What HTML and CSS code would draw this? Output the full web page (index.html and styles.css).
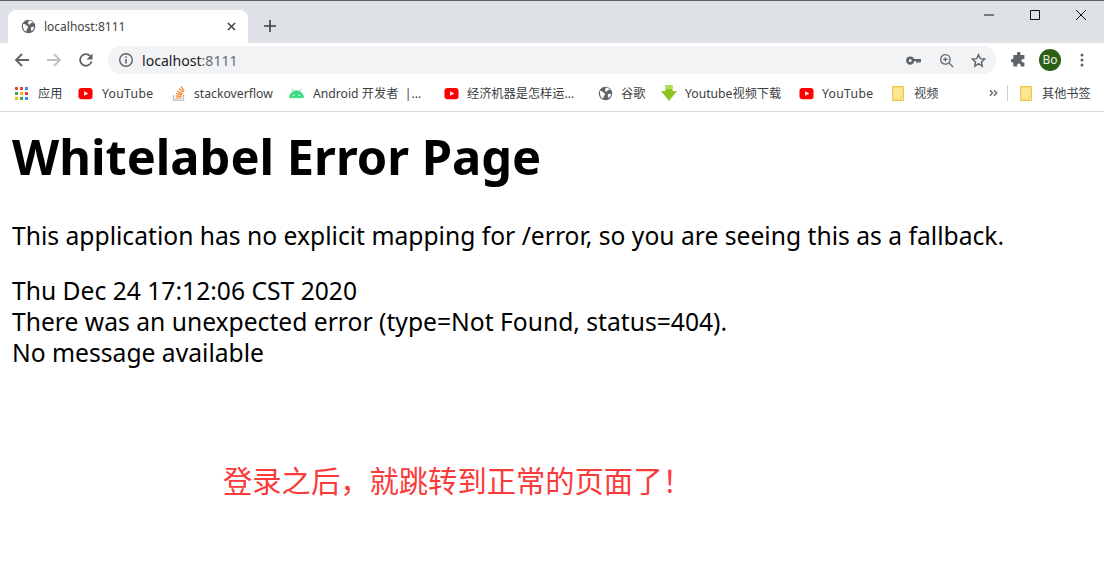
FILE: index.html
```html
<!DOCTYPE html>
<html lang="en">
<head>
  <meta charset="UTF-8" />
  <title>localhost:8111</title>
  <link rel="stylesheet" href="styles.css">
</head>
<body>
  <svg width="0" height="0" class="defs">
    <defs>
      <symbol id="globe" viewBox="0 0 16 16">
        <circle cx="8" cy="8" r="7.2" fill="#5f6368"/>
        <path d="M2.200 5.500c1.600-.4 2.600.3 3.600 1.300.8.800 1.800.800 1.800 2 0 .9-1 1.100-1.300 2-.2.800-.3 1.800-.8 2.500C3.300 12.800 1.600 9 2.200 5.500zM8.500 1.500c1.900.2 3.400 1.100 4.400 2.400-.9.500-1.600 0-2.500.5-.8.500-.5 1.500-1.500 1.500-1 0-1.700-1-1.300-2.200.2-.9.700-1.300.9-2.200zM11 8.800c1-.6 2.300-.5 3 .1-.3 1.900-1.300 3.300-2.800 4.200-.4-.7-.2-1.400-.6-2.100-.3-.7-.2-1.700.4-2.200z" fill="#fff"/>
      </symbol>
      <symbol id="yt" viewBox="0 0 16 16">
        <rect x="0.500" y="2" width="15" height="12" rx="3.200" fill="#f00"/>
        <path d="M6.500 5.500v5L11 8z" fill="#fff"/>
      </symbol>
      <symbol id="folder" viewBox="0 0 12 15">
        <path d="M.7.700h10.600v13.600H.7z" fill="#fee58f" stroke="#ecc94e" stroke-width="1.300"/>
        <path d="M9 11h2.500v3.300H9z" fill="#fff" stroke="#ecc94e"/>
      </symbol>
    </defs>
  </svg>

  <header class="browser">
    <div class="tab-strip">
      <div class="tab">
        <svg class="tab-icon"><use href="#globe"/></svg>
        <span class="tab-title">localhost:8111</span>
        <svg class="tab-close" viewBox="0 0 10 10"><path d="M1 1l8 8M9 1l-8 8" stroke="#3c4043" stroke-width="1.600"/></svg>
      </div>
      <svg class="new-tab" viewBox="0 0 12 12"><path d="M6 0v12M0 6h12" stroke="#3c4043" stroke-width="1.600"/></svg>
      <div class="window-btns">
        <svg viewBox="0 0 12 12"><path d="M1 6h10" stroke="#111" stroke-width="1"/></svg>
        <svg viewBox="0 0 12 12"><path d="M1.500 1.500h9v9h-9z" fill="none" stroke="#111" stroke-width="1"/></svg>
        <svg viewBox="0 0 12 12"><path d="M1 1l10 10M11 1L1 11" stroke="#111" stroke-width="1"/></svg>
      </div>
    </div>

    <div class="toolbar">
      <svg class="nav-btn" viewBox="0 0 16 16"><path d="M15 8H2M8 2L2 8l6 6" fill="none" stroke="#5f6368" stroke-width="1.800"/></svg>
      <svg class="nav-btn" viewBox="0 0 16 16"><path d="M1 8h13M8 2l6 6-6 6" fill="none" stroke="#bdc1c6" stroke-width="1.800"/></svg>
      <svg class="nav-btn" viewBox="0 0 16 16"><path d="M13.500 9.500A5.800 5.800 0 1 1 12.200 4" fill="none" stroke="#5f6368" stroke-width="1.800"/><path d="M14.500 1.500v6h-6z" fill="#5f6368"/></svg>
      <div class="omnibox">
        <svg class="info" viewBox="0 0 16 16"><circle cx="8" cy="8" r="6.300" fill="none" stroke="#5f6368" stroke-width="1.400"/><path d="M8 7v4.500M8 4.300v1.500" stroke="#5f6368" stroke-width="1.500"/></svg>
        <span class="url">localhost<span class="url-port">:8111</span></span>
        <svg class="omni-icon key" viewBox="0 0 16 16"><circle cx="4.500" cy="8" r="3" fill="none" stroke="#5f6368" stroke-width="2.800"/><path d="M7 7.500h8.500v1.500M12 8v2.500M14.500 8v2" fill="none" stroke="#5f6368" stroke-width="2.200"/></svg>
        <svg class="omni-icon zoom" viewBox="0 0 16 16"><circle cx="6.800" cy="6.800" r="5" fill="none" stroke="#5f6368" stroke-width="1.400"/><path d="M10.500 10.500l4.500 4.500M4.500 6.800h4.600M6.800 4.500v4.600" stroke="#5f6368" stroke-width="1.400"/></svg>
        <svg class="omni-icon star" viewBox="0 0 16 16"><path d="M8 1.800l1.900 4.200 4.600.5-3.400 3.100.9 4.500L8 11.300l-4 2.800.9-4.500L1.500 6.500l4.600-.5z" fill="none" stroke="#5f6368" stroke-width="1.500"/></svg>
      </div>
      <svg class="ext" viewBox="0 0 16 16"><path d="M6 1.500a1.700 1.700 0 0 1 3.400 0V3h4v4h-1.200a1.800 1.800 0 0 0 0 3.600h1.200v4H9.700v-1.200a1.800 1.800 0 0 0-3.600 0v1.200H2.300v-4H1a2 2 0 0 1 0-3.600h1.300V3H6z" fill="#5f6368"/></svg>
      <div class="avatar">Bo</div>
      <svg class="menu" viewBox="0 0 4 16"><circle cx="2" cy="3" r="1.500" fill="#5f6368"/><circle cx="2" cy="8" r="1.500" fill="#5f6368"/><circle cx="2" cy="13" r="1.500" fill="#5f6368"/></svg>
    </div>

    <div class="bookmarks">
      <div class="bm bm-apps">
        <svg class="bm-icon" viewBox="0 0 15 15">
          <g fill="#ea4335"><rect x="1" y="1" width="3" height="3"/><rect x="6" y="1" width="3" height="3"/></g><rect x="11" y="1" width="3" height="3" fill="#4285f4"/>
          <rect x="1" y="6" width="3" height="3" fill="#34a853"/><rect x="6" y="6" width="3" height="3" fill="#fbbc05"/><rect x="11" y="6" width="3" height="3" fill="#ea4335"/>
          <rect x="1" y="11" width="3" height="3" fill="#fbbc05"/><rect x="6" y="11" width="3" height="3" fill="#34a853"/><rect x="11" y="11" width="3" height="3" fill="#4285f4"/>
        </svg>
        <span>应用</span>
      </div>
      <div class="bm bm-yt1"><svg class="bm-icon"><use href="#yt"/></svg><span class="bm-wide">YouTube</span></div>
      <div class="bm bm-so">
        <svg class="bm-icon bm-tall" viewBox="0 0 16 16">
          <path d="M2.500 10v5.200h10V10" fill="none" stroke="#bcbbbb" stroke-width="1.300"/>
          <path d="M4.500 13h6M4.700 10.800l5.900.6M5.200 8.400l5.700 1.500M6.300 6l5.100 2.700M8 3.600l4.300 3.700M10 1.500l3.200 4.600" stroke="#f48024" stroke-width="1.200"/>
        </svg>
        <span>stackoverflow</span>
      </div>
      <div class="bm bm-android">
        <svg class="bm-icon" viewBox="0 0 16 16"><path d="M0.500 12.500a7.500 7.500 0 0 1 15 0zM3 3l2.500 4M13 3l-2.500 4" fill="#3ddc84" stroke="#3ddc84" stroke-width=".8"/><circle cx="5" cy="9.800" r=".8" fill="#fff"/><circle cx="11" cy="9.800" r=".8" fill="#fff"/></svg>
        <span>Android 开发者 &nbsp;|...</span>
      </div>
      <div class="bm bm-econ"><svg class="bm-icon"><use href="#yt"/></svg><span>经济机器是怎样运...</span></div>
      <div class="bm bm-google"><svg class="bm-icon"><use href="#globe"/></svg><span>谷歌</span></div>
      <div class="bm bm-dl">
        <svg class="bm-icon bm-tall" viewBox="0 0 16 16"><path d="M4.500 0h2v3h1V0h1v3h1V0h2v6H16l-8 10L0 6h4.500z" fill="#8fc31f"/><path d="M4.500 0h7v4h-7z" fill="#b5d95a"/></svg>
        <span>Youtube视频下载</span>
      </div>
      <div class="bm bm-yt2"><svg class="bm-icon"><use href="#yt"/></svg><span class="bm-wide">YouTube</span></div>
      <div class="bm bm-video"><svg class="bm-folder"><use href="#folder"/></svg><span>视频</span></div>
      <svg class="bm-more" viewBox="0 0 10 8"><path d="M1 1l3 3-3 3M5.500 1l3 3-3 3" fill="none" stroke="#5f6368" stroke-width="1.500"/></svg>
      <div class="bm-sep"></div>
      <div class="bm bm-other"><svg class="bm-folder"><use href="#folder"/></svg><span>其他书签</span></div>
    </div>
  </header>

  <main class="page">
    <h1>Whitelabel Error Page</h1>
    <p>This application has no explicit mapping for /error, so you are seeing this as a fallback.</p>
    <div id="created">Thu Dec 24 17:12:06 CST 2020</div>
    <div>There was an unexpected error (type=Not Found, status=404).</div>
    <div>No message available</div>
    <div class="note">登录之后，就跳转到正常的页面了！</div>
  </main>
</body>
</html>
```

FILE: styles.css
```css
html, body {
  margin: 0;
  height: 100%;
  overflow: hidden;
}

body {
  background-color: white;
  color: black;
  font-family: "Noto Sans", "Noto Sans CJK SC", sans-serif;
}

.defs {
  position: absolute;
}

.browser {
  border-bottom: 1px solid #d8d9db;
}

.tab-strip {
  display: flex;
  align-items: flex-end;
  height: 42px;
  background-color: #dee1e6;
  border-top: 1px solid #5f6062;
}

.tab {
  display: flex;
  align-items: center;
  width: 240px;
  height: 33px;
  margin-left: 8px;
  padding: 0 12px 0 13px;
  box-sizing: border-box;
  background-color: white;
  border-radius: 8px 8px 0 0;
}

.tab-icon {
  width: 15px;
  height: 15px;
}

.tab-title {
  flex: 1;
  margin-left: 8px;
  font-size: 12px;
  color: #3c4043;
}

.tab-close {
  width: 9px;
  height: 9px;
}

.new-tab {
  width: 12px;
  height: 12px;
  margin: 0 0 11px 16px;
}

.window-btns {
  display: flex;
  gap: 34px;
  margin: 0 17px 22px auto;
}

.window-btns svg {
  width: 12px;
  height: 12px;
}

.toolbar {
  display: flex;
  align-items: center;
  height: 34px;
  background-color: white;
  padding: 0 0 0 14px;
}

.nav-btn {
  width: 16px;
  height: 16px;
  margin-right: 16px;
}

.omnibox {
  display: flex;
  align-items: center;
  width: 888px;
  height: 28px;
  margin-left: -2px;
  padding: 0 10px;
  box-sizing: border-box;
  background-color: #f1f3f4;
  border-radius: 14px;
}

.info {
  width: 16px;
  height: 16px;
}

.url {
  flex: 1;
  margin-left: 8px;
  font-size: 14.1px;
  color: #202124;
}

.url-port {
  color: #6a6d71;
}

.omni-icon {
  width: 15px;
  height: 15px;
}

.zoom {
  margin-left: 18px;
}

.star {
  margin-left: 17px;
}

.ext {
  width: 16px;
  height: 16px;
  margin-left: 15px;
}

.avatar {
  width: 22px;
  height: 22px;
  margin-left: 12px;
  border-radius: 50%;
  background-color: #2d6017;
  color: #e8eee4;
  font-size: 12px;
  line-height: 22px;
  text-align: center;
}

.menu {
  width: 4px;
  height: 16px;
  margin-left: 19px;
}

.bookmarks {
  display: flex;
  align-items: center;
  height: 32px;
  padding: 0 0 2px 14px;
  background-color: white;
  font-size: 12.2px;
  color: #3c4043;
}

.bm {
  display: flex;
  align-items: center;
  gap: 8px;
  flex: none;
}

.bm-icon {
  width: 15px;
  height: 15px;
}

.bm-tall {
  width: 16px;
  height: 16px;
  margin-right: -1px;
}

.bm-wide {
  margin-left: 1px;
  letter-spacing: 0.3px;
}

.bm-folder {
  width: 12px;
  height: 15px;
}

.bm-apps { width: 64px; gap: 9px; }
.bm-yt1 { width: 93px; }
.bm-so { width: 118px; }
.bm-android { width: 155px; gap: 9px; }
.bm-econ { width: 154px; }
.bm-google { width: 63px; }
.bm-dl { width: 138px; gap: 9px; }
.bm-yt2 { width: 93px; gap: 7px; }
.bm-video { width: 97px; gap: 10px; }
.bm-other { gap: 10px; }

.bm-more {
  width: 9px;
  height: 8px;
  flex: none;
}

.bm-sep {
  width: 1px;
  height: 16px;
  margin: 0 12px 0 9px;
  background-color: #ccced1;
}

.page {
  padding: 0 12px;
  font-size: 24.65px;
  line-height: 31px;
}

h1 {
  margin: 13px 0 33px;
  font-size: 48.8px;
  line-height: 62px;
  font-weight: bold;
}

p {
  margin: 0 0 24px;
}

.note {
  margin: 93px 0 0 211px;
  font-size: 29.3px;
  line-height: 40px;
  color: #fb3a3c;
}
```
